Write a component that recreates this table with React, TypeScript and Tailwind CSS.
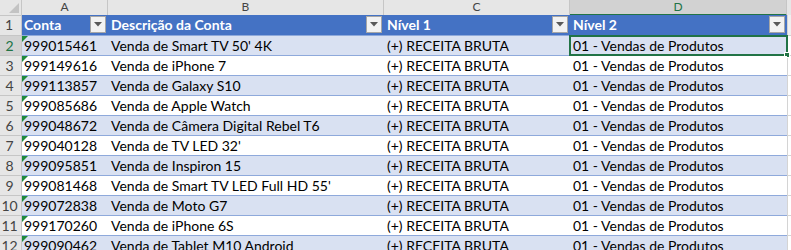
const rows: [string, string][] = [
  ["999015461", "Venda de Smart TV 50' 4K"],
  ["999149616", "Venda de iPhone 7"],
  ["999113857", "Venda de Galaxy S10"],
  ["999085686", "Venda de Apple Watch"],
  ["999048672", "Venda de Câmera Digital Rebel T6"],
  ["999040128", "Venda de TV LED 32'"],
  ["999095851", "Venda de Inspiron 15"],
  ["999081468", "Venda de Smart TV LED Full HD 55'"],
  ["999072838", "Venda de Moto G7"],
  ["999170260", "Venda de iPhone 6S"],
  ["999090462", "Venda de Tablet M10 Android"],
];

const cols = "grid grid-cols-[22px_86px_276px_186px_217px_1fr]";

function FilterButton() {
  return (
    <span className="absolute right-[2px] top-[1px] flex h-[17px] w-[16px] items-center justify-center border border-[#a6a6a6] bg-[#f2f2f2]">
      <svg width="8" height="5" viewBox="0 0 8 5">
        <path d="M0 0h8L4 4.5z" fill="#595959" />
      </svg>
    </span>
  );
}

function Triangle() {
  return (
    <svg className="absolute left-0 top-0" width="6" height="6" viewBox="0 0 6 6">
      <path d="M0 0h6L0 6z" fill="#1e8a3c" />
    </svg>
  );
}

export default function App() {
  return (
    <div
      className="h-[250px] w-[791px] overflow-hidden bg-white text-[14px] text-black"
      style={{ fontFamily: "Lato, 'Noto Sans', sans-serif" }}
    >
      {/* column letters */}
      <div className={`${cols} h-[15px] bg-[#e6e6e6] text-[12px] leading-[14px] text-[#444]`}>
        <div className="relative border-r border-b border-[#c6c6c6]">
          <svg className="absolute right-[2px] bottom-[2px]" width="10" height="10" viewBox="0 0 10 10">
            <path d="M10 0v10H0z" fill="#c3c3c3" />
          </svg>
        </div>
        <div className="border-r border-b border-[#c6c6c6] text-center">A</div>
        <div className="border-r border-b border-[#c6c6c6] text-center">B</div>
        <div className="border-r border-b border-[#c6c6c6] text-center">C</div>
        <div className="border-b-2 border-r border-[#c6c6c6] border-b-[#217346] bg-[#d2d2d2] text-center text-[#217346]">
          D
        </div>
        <div className="border-b border-[#c6c6c6]" />
      </div>

      {/* table header */}
      <div className={`${cols} h-[21px] leading-[20px]`}>
        <div className="border-r border-b border-[#c6c6c6] bg-[#e6e6e6] pl-[5px] text-[14px] text-[#444]">
          1
        </div>
        <div className="relative border-b border-[#8ea9db] bg-[#4472c4] pl-[2px] font-bold text-white">
          Conta
          <FilterButton />
        </div>
        <div className="relative border-b border-[#8ea9db] bg-[#4472c4] pl-[3px] font-bold text-white">
          Descrição da Conta
          <FilterButton />
        </div>
        <div className="relative border-b border-[#8ea9db] bg-[#4472c4] pl-[3px] font-bold text-white">
          Nível 1
          <FilterButton />
        </div>
        <div className="relative border-b border-[#8ea9db] bg-[#4472c4] pl-[3px] font-bold text-white">
          Nível 2
          <FilterButton />
        </div>
        <div className="border-b border-l border-[#d4d4d4] bg-[#f0f0f0]" />
      </div>

      {rows.map(([conta, desc], i) => {
        const band = i % 2 === 0 ? "bg-[#d9e1f2]" : "bg-white";
        const selected = i === 0;
        return (
          <div key={conta} className={`${cols} h-[20px] leading-[19px]`}>
            <div
              className={`border-r border-b border-[#c6c6c6] pr-[2px] text-center text-[14px] ${
                selected ? "bg-[#d2d2d2] text-[#217346]" : "bg-[#e6e6e6] text-[#444]"
              }`}
            >
              {i + 2}
            </div>
            <div className={`relative border-b border-[#8ea9db] pl-[2px] ${band}`}>
              <Triangle />
              {conta}
            </div>
            <div className={`border-b border-[#8ea9db] pl-[3px] ${band}`}>{desc}</div>
            <div className={`border-b border-[#8ea9db] pl-[3px] ${band}`}>(+) RECEITA BRUTA</div>
            <div className={`relative border-b border-[#8ea9db] pl-[3px] ${band}`}>
              01 - Vendas de Produtos
              {selected ? (
                <>
                  <span className="pointer-events-none absolute -left-[1px] -top-[1px] -right-[1px] -bottom-[1px] border-2 border-[#217346]" />
                  <span className="absolute -bottom-[3px] -right-[3px] h-[6px] w-[6px] border border-white bg-[#217346]" />
                </>
              ) : null}
            </div>
            <div className="border-b border-l border-[#d4d4d4] bg-white" />
          </div>
        );
      })}
    </div>
  );
}
